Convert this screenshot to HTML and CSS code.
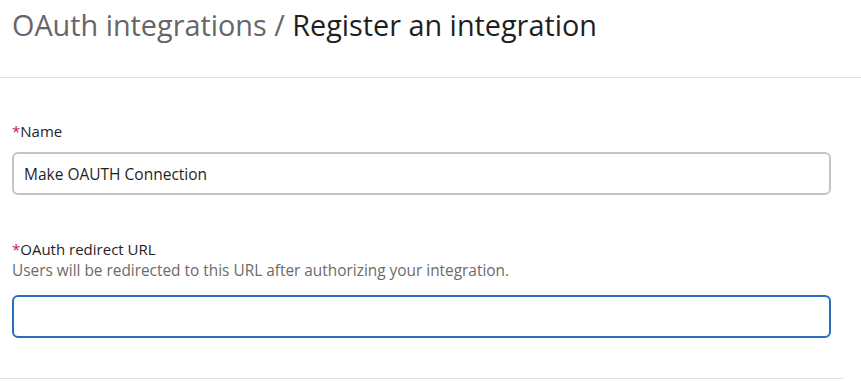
FILE: index.html
```html
<!DOCTYPE html>
<html lang="en">
<head>
    <meta charset="utf-8"/>
    <title>Register an integration</title>
    <link rel="stylesheet" href="styles.css">
</head>
<body>

<div class="page-header">
    <h1 class="page-title"><span class="crumb">OAuth integrations</span> <span class="sep">/</span> Register an integration</h1>
</div>

<form class="form">
    <div class="field">
        <label class="label" for="name"><span class="req">*</span>Name</label>
        <input class="input" id="name" type="text" value="Make OAUTH Connection">
    </div>

    <div class="field">
        <label class="label" for="redirect"><span class="req">*</span>OAuth redirect URL</label>
        <div class="hint">Users will be redirected to this URL after authorizing your integration.</div>
        <input class="input input-focus" id="redirect" type="text">
    </div>
</form>

</body>
</html>
```

FILE: styles.css
```css
body {
    margin: 0;
    font-family: "Open Sans", "Noto Sans", sans-serif;
    color: #1f1f1f;
    background: #fff;
}

.page-header {
    box-sizing: border-box;
    padding: 4px 12px 0;
    height: 78px;
    border-bottom: 1px solid #e1e1e1;
}

.page-title {
    margin: 0;
    font-size: 28.8px;
    font-weight: normal;
    line-height: 42px;
    color: #1f1f1f;
}

.crumb,
.sep {
    color: #666;
}

.form {
    box-sizing: border-box;
    padding: 43px 12px 0 12px;
    width: 843px;
    height: 301px;
    border-bottom: 1px solid #e1e1e1;
}

.field {
    display: flex;
    flex-direction: column;
    margin-bottom: 44px;
}

.label {
    font-size: 15px;
    line-height: 21px;
    color: #1f1f1f;
    margin-bottom: 10px;
}

.req {
    color: #c3185b;
}

.hint {
    font-size: 15.4px;
    line-height: 21px;
    color: #6b6b6b;
    margin-top: -10px;
    margin-bottom: 14px;
}

.input {
    box-sizing: border-box;
    height: 43px;
    padding: 0 10px;
    font-family: inherit;
    font-size: 15.5px;
    color: #1f1f1f;
    border: 2px solid #c4c4c4;
    border-radius: 6px;
    outline: none;
}

.input-focus {
    border-color: #2a6ebd;
}
```
